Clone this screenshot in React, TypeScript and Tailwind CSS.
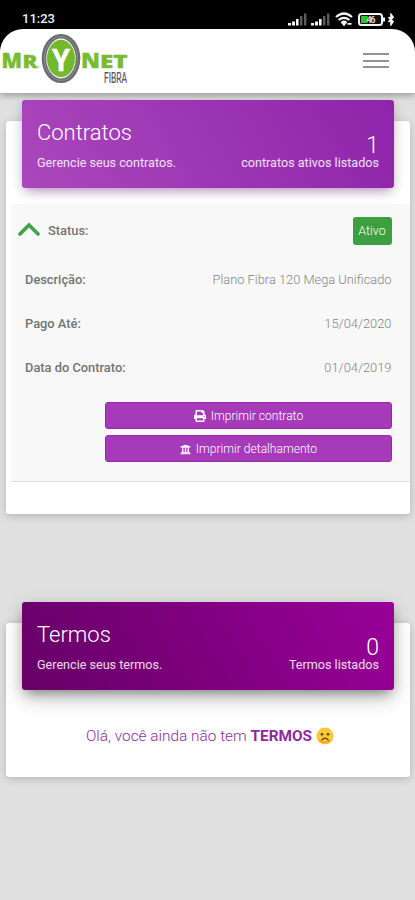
import type { ReactNode } from "react";
import { FaPrint, FaUniversity } from "react-icons/fa";

function Signal() {
  return (
    <svg width="19" height="13" viewBox="0 0 19 13" className="block">
      <g fill="#f4f4f4">
        <rect x="0" y="10" width="3" height="2.5" />
        <rect x="4" y="8.5" width="3" height="4" />
        <rect x="8" y="6" width="2.6" height="6.5" />
      </g>
      <g fill="#5c5c5c">
        <rect x="12" y="3" width="2.4" height="9.5" />
        <rect x="16" y="0.5" width="2.4" height="12" />
      </g>
    </svg>
  );
}

function StatusBar() {
  return (
    <div className="flex h-[29px] items-start justify-between bg-black pl-[22px] pr-[21px]">
      <span className="mt-[10px] text-[13px] font-medium leading-[18px] text-[#f1f1f1]">11:23</span>
      <div className="mt-[12px] flex items-center">
        <Signal />
        <span className="w-[4px]" />
        <Signal />
        <span className="w-[5px]" />
        <svg width="18" height="14" viewBox="0 0 18 14" fill="none" stroke="#f4f4f4" strokeWidth="2.2">
          <path d="M1 5 Q9 -2 17 5M3.6 8Q9 3.6 14.4 8M6.4 10.8Q9 8.6 11.4 10.6" />
          <path d="M7.5 11.2h3L9 13zM12.5 11.8h4" strokeWidth="1.7" />
        </svg>
        <span className="w-[5px]" />
        <svg width="27" height="13" viewBox="0 0 27 13">
          <rect x="1" y="1" width="23" height="11" rx="2.5" fill="#111" stroke="#f4f4f4" strokeWidth="2" />
          <rect x="25" y="4.5" width="2" height="4" fill="#f4f4f4" />
          <rect x="3" y="3" width="7" height="7" rx="1" fill="#2bc425" />
          <text x="8.5" y="9.8" fontSize="9" fontWeight="700" fill="#dcdcdc" textLength="9">46</text>
        </svg>
        <span className="w-[3px]" />
        <svg width="6" height="13" viewBox="0 0 6 13" fill="none" stroke="#f4f4f4" strokeWidth="1.7">
          <path d="M0.5 4 5 8.6 3 11.5V1.5L5 4.2 0.5 9" />
        </svg>
      </div>
    </div>
  );
}

function Logo() {
  return (
    <svg width="130" height="62" viewBox="0 0 130 62" className="block overflow-visible">
      <g fill="#7abb33" stroke="#7abb33" strokeWidth="0.4" fontFamily="'Open Sans', 'Liberation Sans', sans-serif" fontWeight="800">
        <text x="1.5" y="39" fontSize="21" textLength="20.5" lengthAdjust="spacingAndGlyphs">M</text>
        <text x="22.5" y="39" fontSize="18" textLength="15" lengthAdjust="spacingAndGlyphs">R</text>
        <text x="81" y="39" fontSize="21" textLength="19" lengthAdjust="spacingAndGlyphs">N</text>
        <text x="100" y="39" fontSize="18" textLength="27.5" lengthAdjust="spacingAndGlyphs">ET</text>
      </g>
      <circle cx="38.5" cy="37.5" r="1" fill="#b9d99a" />
      <ellipse cx="61" cy="29.5" rx="17" ry="22.3" fill="#fff" stroke="#6c6d72" strokeWidth="4.6" />
      <ellipse cx="61" cy="29.5" rx="16.6" ry="21.8" fill="none" stroke="#8d8e92" strokeWidth="1" />
      <ellipse cx="61" cy="29.5" rx="14" ry="18.8" fill="#74b92b" />
      <text x="52" y="41.5" fontSize="32" fontWeight="700" fill="#fff" stroke="#fff" strokeWidth="0.4" textLength="18" lengthAdjust="spacingAndGlyphs" fontFamily="Roboto, sans-serif">Y</text>
      <text x="104" y="53.5" fontSize="15" fill="#55565a" stroke="#55565a" strokeWidth="0.2" textLength="23" lengthAdjust="spacingAndGlyphs" fontFamily="Roboto, sans-serif">FIBRA</text>
    </svg>
  );
}

function Header() {
  return (
    <div className="bg-[linear-gradient(to_bottom,#000_50%,#e0e0e0_50%)]">
      <header className="flex h-[64px] items-start justify-between rounded-t-[23px] bg-white pr-[26px] shadow-[0_2px_7px_rgba(0,0,0,0.35)]">
        <Logo />
        <div className="mt-[24px] flex w-[26px] flex-col gap-[4.5px]">
          <span className="h-[2px] bg-[#929292]" />
          <span className="h-[2px] bg-[#929292]" />
          <span className="h-[2px] bg-[#929292]" />
        </div>
      </header>
    </div>
  );
}

interface BannerProps {
  title: string;
  subtitle: string;
  count: string;
  label: string;
  tone: string;
}

function Banner({ title, subtitle, count, label, tone }: BannerProps) {
  return (
    <div className={"relative mx-4 -mt-[21px] flex h-[88px] justify-between rounded-[3px] px-[15px] text-white " + tone}>
      <div className="pt-[20px]">
        <h2 className="text-[22px] font-light leading-[26px]">{title}</h2>
        <p className="mt-[9px] text-[12.6px] font-normal leading-[16px] text-white/85">{subtitle}</p>
      </div>
      <div className="pt-[36px] text-right">
        <div className="text-[23px] font-light leading-[19px]">{count}</div>
        <p className="text-[12.6px] leading-[16px] text-white/85">{label}</p>
      </div>
    </div>
  );
}

function Row({ label, value }: { label: string; value: string }) {
  return (
    <div className="flex h-[44px] items-center justify-between pl-[14px] pr-[18.5px] pt-[1px] text-[12.85px]">
      <span className="font-medium text-[#737373]">{label}</span>
      <span className="font-light text-[#858585]">{value}</span>
    </div>
  );
}

function Action({ icon, children }: { icon: ReactNode; children: ReactNode }) {
  return (
    <button className="flex h-[27px] items-center justify-center gap-[5px] rounded-[3px] border border-[#9729a8] bg-[#a63ab8] pt-[1px] text-[12.1px] font-light text-white">
      {icon}
      <span>{children}</span>
    </button>
  );
}

function SadFace() {
  return (
    <svg width="18" height="18" viewBox="0 0 18 18">
      <circle cx="9" cy="9" r="8.5" fill="#fcc934" />
      <path d="M1.5 12a8.5 8.5 0 0 0 15 0Q9 17 1.5 12" fill="#f5a91d" />
      <circle cx="6" cy="7.3" r="1.3" fill="#543d25" />
      <circle cx="12" cy="7.3" r="1.3" fill="#543d25" />
      <path d="M5.7 13.2Q9 9.2 12.3 13.2" fill="none" stroke="#543d25" strokeWidth="1.2" strokeLinecap="round" />
    </svg>
  );
}

export default function App() {
  return (
    <div className="h-[900px] w-[415px] overflow-hidden bg-[#e0e0e0] font-[Roboto,'Liberation_Sans',sans-serif]">
      <StatusBar />
      <Header />
      <main className="pl-[6px] pr-[5px] pt-[28px]">
        <section className="flex h-[393px] flex-col rounded-[3px] bg-white shadow-[0_2px_8px_rgba(0,0,0,0.2)]">
          <Banner
            title="Contratos"
            subtitle="Gerencie seus contratos."
            count="1"
            label="contratos ativos listados"
            tone="bg-[linear-gradient(60deg,#ab47bc,#8e24aa)] shadow-[0_4px_14px_rgba(0,0,0,0.14),0_5px_10px_-4px_rgba(156,39,176,0.5)]"
          />
          <div className="ml-[5px] mt-[16px] h-[278px] border-b border-[#dedede] bg-[#f8f8f8]">
            <div className="flex h-[53px] items-center justify-between pl-[7px] pr-[18.5px] pt-[1px]">
              <div className="flex items-center gap-[8px]">
                <svg width="22" height="14" viewBox="0 0 22 14" className="mb-[4px]">
                  <path d="M2 12 11 3l9 9" fill="none" stroke="#3ea34a" strokeWidth="3.6" strokeLinecap="round" />
                </svg>
                <span className="text-[12.85px] font-medium text-[#737373]">Status:</span>
              </div>
              <span className="flex h-[28px] w-[39px] items-center justify-center rounded-[3px] bg-[#3c9f40] pt-[1px] text-[12.5px] font-light text-white">Ativo</span>
            </div>
            <Row label="Descrição:" value="Plano Fibra 120 Mega Unificado" />
            <Row label="Pago Até:" value="15/04/2020" />
            <Row label="Data do Contrato:" value="01/04/2019" />
            <div className="ml-[94px] mr-[18px] mt-[13px] flex flex-col gap-[6px]">
              <Action icon={<FaPrint size={12} />}>Imprimir contrato</Action>
              <Action icon={<FaUniversity size={11} />}>Imprimir detalhamento</Action>
            </div>
          </div>
        </section>
        <section className="mt-[109px] flex h-[154px] flex-col rounded-[3px] bg-white shadow-[0_2px_8px_rgba(0,0,0,0.2)]">
          <Banner
            title="Termos"
            subtitle="Gerencie seus termos."
            count="0"
            label="Termos listados"
            tone="bg-[linear-gradient(60deg,#660066,#990099)] shadow-[0_8px_20px_rgba(0,0,0,0.22),0_6px_12px_-4px_rgba(0,0,0,0.4)]"
          />
          <p className="mt-[36px] flex items-center justify-center gap-[4px] pl-[4px] text-[15.4px] leading-[20px] text-[#8f299f]">
            <span className="font-light">
              Olá, você ainda não tem <b className="font-bold">TERMOS</b>
            </span>
            <SadFace />
          </p>
        </section>
      </main>
    </div>
  );
}
